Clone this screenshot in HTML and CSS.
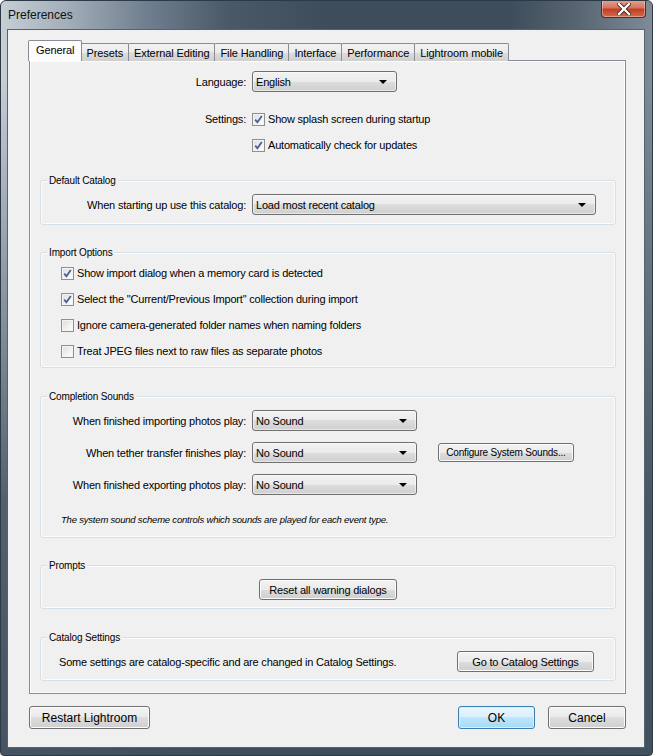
FILE: index.html
```html
<!DOCTYPE html>
<html lang="en">
<head>
  <meta charset="UTF-8" />
  <title>Preferences</title>
  <link rel="stylesheet" href="styles.css">
</head>
<body>

  <div class="window">

    <!-- Title bar -->
    <div class="titlebar">
      <span class="title">Preferences</span>
      <div class="close">
        <svg width="14" height="12" viewBox="0 0 14 12">
          <path d="M2 1 L12 11 M12 1 L2 11" stroke="#3a1a14" stroke-width="4" stroke-linecap="square" />
          <path d="M2 1 L12 11 M12 1 L2 11" stroke="#fff" stroke-width="2.4" stroke-linecap="square" />
        </svg>
      </div>
    </div>

    <div class="client">

      <!-- Tabs -->
      <div class="tabs">
        <div class="tab active">General</div>
        <div class="tab">Presets</div>
        <div class="tab">External Editing</div>
        <div class="tab">File Handling</div>
        <div class="tab">Interface</div>
        <div class="tab">Performance</div>
        <div class="tab">Lightroom mobile</div>
      </div>

      <div class="panel">

        <div class="top-section">
          <div class="field">
            <span class="label top-label">Language:</span>
            <div class="select lang-select"><span>English</span><i class="arrow"></i></div>
          </div>

          <div class="field check-row first">
            <span class="label top-label">Settings:</span>
            <span class="check checked"></span>
            <span>Show splash screen during startup</span>
          </div>
          <div class="field check-row">
            <span class="label top-label"></span>
            <span class="check checked"></span>
            <span>Automatically check for updates</span>
          </div>
        </div>

        <!-- Default Catalog -->
        <div class="group catalog-group">
          <span class="group-title">Default Catalog</span>
          <div class="field">
            <span class="label">When starting up use this catalog:</span>
            <div class="select catalog-select"><span>Load most recent catalog</span><i class="arrow"></i></div>
          </div>
        </div>

        <!-- Import Options -->
        <div class="group import-group">
          <span class="group-title">Import Options</span>
          <div class="option"><span class="check checked"></span><span>Show import dialog when a memory card is detected</span></div>
          <div class="option"><span class="check checked"></span><span>Select the "Current/Previous Import" collection during import</span></div>
          <div class="option"><span class="check"></span><span>Ignore camera-generated folder names when naming folders</span></div>
          <div class="option"><span class="check"></span><span>Treat JPEG files next to raw files as separate photos</span></div>
        </div>

        <!-- Completion Sounds -->
        <div class="group sounds-group">
          <span class="group-title">Completion Sounds</span>
          <div class="field sound-row">
            <span class="label">When finished importing photos play:</span>
            <div class="select sound-select"><span>No Sound</span><i class="arrow"></i></div>
          </div>
          <div class="field sound-row">
            <span class="label">When tether transfer finishes play:</span>
            <div class="select sound-select"><span>No Sound</span><i class="arrow"></i></div>
            <button class="btn btn-small">Configure System Sounds...</button>
          </div>
          <div class="field sound-row">
            <span class="label">When finished exporting photos play:</span>
            <div class="select sound-select"><span>No Sound</span><i class="arrow"></i></div>
          </div>
          <p class="note">The system sound scheme controls which sounds are played for each event type.</p>
        </div>

        <!-- Prompts -->
        <div class="group prompts-group">
          <span class="group-title">Prompts</span>
          <button class="btn reset-btn">Reset all warning dialogs</button>
        </div>

        <!-- Catalog Settings -->
        <div class="group settings-group">
          <span class="group-title">Catalog Settings</span>
          <span class="settings-text">Some settings are catalog-specific and are changed in Catalog Settings.</span>
          <button class="btn goto-btn">Go to Catalog Settings</button>
        </div>

      </div>

      <!-- Dialog buttons -->
      <div class="footer">
        <button class="btn restart-btn">Restart Lightroom</button>
        <div class="footer-right">
          <button class="btn btn-default ok-btn">OK</button>
          <button class="btn cancel-btn">Cancel</button>
        </div>
      </div>

    </div>
  </div>

</body>
</html>
```

FILE: styles.css
```css
html, body {
  margin: 0;
  padding: 0;
  background: #ffffff;
}

body {
  font-family: "Liberation Sans", Arial, sans-serif;
  font-size: 11px;
  letter-spacing: -0.2px;
  color: #000;
}

.window {
  width: 653px;
  height: 756px;
  box-sizing: border-box;
  display: flex;
  flex-direction: column;
  border: 1px solid #2c3a47;
  border-radius: 6px 6px 4px 4px;
  background:
    linear-gradient(to bottom, rgba(62, 77, 92, 0) 0px, rgba(62, 77, 92, 0) 80px, rgba(62, 77, 92, 0.85) 500px, rgba(62, 77, 92, 0.95) 756px),
    linear-gradient(to right, #c6ced6 0%, #a3afb9 10%, #718090 22%, #4a5968 35%, #3e4d5c 50%, #3e4d5c 78%, #56646f 88%, #7f8b96 100%);
  overflow: hidden;
}

/* Title bar */

.titlebar {
  height: 28px;
  display: flex;
  justify-content: space-between;
  align-items: flex-start;
}

.title {
  font-size: 12px;
  letter-spacing: 0;
  color: #111;
  margin: 7px 0 0 7px;
}

.close {
  width: 45px;
  height: 18px;
  margin-right: 6px;
  margin-top: -1px;
  box-sizing: border-box;
  border: 1px solid #5a2a22;
  border-top: none;
  border-radius: 0 0 4px 4px;
  background: linear-gradient(to bottom, #e8a493 0%, #d2745e 45%, #c13f24 55%, #d36a4c 100%);
  box-shadow: inset 0 0 0 1px rgba(255, 255, 255, 0.35);
  display: flex;
  justify-content: center;
  align-items: center;
}

/* Client area */

.client {
  flex: 1;
  margin: 0 7px 7px 6px;
  border: 1px solid #56626d;
  background-color: #f0f0f0;
  display: flex;
  flex-direction: column;
}

.tabs {
  display: flex;
  align-items: flex-end;
  height: 31px;
  padding-left: 20px;
  margin-bottom: -1px;
  box-sizing: border-box;
  position: relative;
  z-index: 1;
}

.tab {
  height: 18px;
  padding: 0 5px;
  box-sizing: border-box;
  display: flex;
  align-items: center;
  border: 1px solid #898c95;
  border-bottom: none;
  margin-left: -1px;
  border-radius: 2px 2px 0 0;
  background: linear-gradient(to bottom, #f2f2f2 0%, #ebebeb 50%, #dddddd 50%, #cfcfcf 100%);
  letter-spacing: -0.1px;
  white-space: nowrap;
}

.tab.active {
  height: 21px;
  margin-left: 0;
  padding: 0 7px 2px;
  background: #fcfcfc;
  position: relative;
  z-index: 2;
  margin-right: -1px;
}

.panel {
  height: 634px;
  margin: 0 18px 0 21px;
  box-sizing: border-box;
  border: 1px solid #898c95;
  background-color: #f0f0f0;
  box-shadow: inset 0 0 0 1px #fcfcfc;
  padding-top: 10px;
}

/* Rows */

.field {
  display: flex;
  align-items: center;
}

.label {
  text-align: right;
  margin-right: 6px;
  white-space: nowrap;
  flex-shrink: 0;
}

.top-label {
  width: 216px;
}

.check-row {
  height: 26px;
}

.check-row.first {
  margin-top: 14px;
}

.check-row span:last-child,
.option span:last-child {
  margin-left: 3px;
}

.select {
  height: 21px;
  box-sizing: border-box;
  display: flex;
  align-items: center;
  justify-content: space-between;
  padding: 0 9px 0 3px;
  border: 1px solid #707070;
  border-radius: 3px;
  background: linear-gradient(to bottom, #f2f2f2 0%, #ebebeb 50%, #dddddd 50%, #cfcfcf 100%);
  box-shadow: inset 0 0 0 1px rgba(255, 255, 255, 0.5);
}

.arrow {
  width: 0;
  height: 0;
  border-left: 4px solid transparent;
  border-right: 4px solid transparent;
  border-top: 4px solid #000;
  margin-top: 1px;
}

.lang-select {
  width: 145px;
}

.check {
  width: 13px;
  height: 13px;
  box-sizing: border-box;
  flex-shrink: 0;
  border: 1px solid #8e8f8f;
  background: linear-gradient(135deg, #dcdcdc 0%, #f6f6f6 70%, #ffffff 100%);
  box-shadow: inset 0 0 0 1px #f4f4f4;
}

.check.checked {
  background-image:
    url("data:image/svg+xml,%3Csvg xmlns='http://www.w3.org/2000/svg' width='11' height='11'%3E%3Cpath d='M2.2 5.6 L4.4 8.2 L8.8 2' fill='none' stroke='%234a5f97' stroke-width='1.8'/%3E%3C/svg%3E"),
    linear-gradient(135deg, #dcdcdc 0%, #f6f6f6 70%, #ffffff 100%);
  background-repeat: no-repeat;
  background-position: center;
}

/* Group boxes */

.group {
  position: relative;
  margin: 0 9px 0 10px;
  border: 1px solid #d5dfe5;
  border-radius: 3px;
  box-shadow: inset 0 0 0 1px #fcfcfc;
}

.group-title {
  position: absolute;
  top: -7px;
  left: 6px;
  padding: 0 2px 0 2px;
  background-color: #f0f0f0;
  font-size: 10px;
  letter-spacing: -0.15px;
  line-height: 13px;
}

.group .label {
  width: 205px;
}

.catalog-group {
  margin-top: 22px;
  padding: 13px 0 9px;
}

.catalog-select {
  width: 344px;
}

.import-group {
  margin-top: 27px;
  padding: 7px 0 3px 20px;
}

.option {
  height: 26px;
  display: flex;
  align-items: center;
}

.sounds-group {
  margin-top: 28px;
  padding: 13px 0 11px;
}

.sound-row + .sound-row {
  margin-top: 11px;
}

.sound-select {
  width: 165px;
}

.note {
  margin: 19px 0 0 20px;
  font-size: 9.5px;
  font-style: italic;
  line-height: 12px;
}

.prompts-group {
  margin-top: 27px;
  padding: 13px 0 8px;
  display: flex;
  justify-content: center;
}

.settings-group {
  margin-top: 28px;
  padding: 13px 0 8px 18px;
  display: flex;
  align-items: center;
  justify-content: space-between;
}

/* Buttons */

.btn {
  height: 21px;
  box-sizing: border-box;
  padding: 0;
  font-family: inherit;
  font-size: 11px;
  letter-spacing: -0.2px;
  color: #000;
  border: 1px solid #707070;
  border-radius: 3px;
  background: linear-gradient(to bottom, #f2f2f2 0%, #ebebeb 50%, #dddddd 50%, #cfcfcf 100%);
  box-shadow: inset 0 0 0 1px #fbfbfb;
}

.btn-small {
  width: 136px;
  height: 19px;
  margin-left: 21px;
  font-size: 10px;
}

.reset-btn {
  width: 138px;
}

.goto-btn {
  width: 137px;
  margin-right: 21px;
}

.btn-default {
  border-color: #3c7fb1;
  background: linear-gradient(to bottom, #eaf6fd 0%, #d9f0fc 50%, #bee6fd 50%, #a7d9f5 100%);
  box-shadow: inset 0 0 0 1px #d6f0fc;
}

.footer {
  flex: 1;
  display: flex;
  justify-content: space-between;
  align-items: flex-start;
  padding: 12px 18px 0 21px;
}

.footer .btn {
  height: 23px;
  font-size: 12px;
  letter-spacing: 0;
}

.restart-btn {
  width: 121px;
}

.footer-right {
  display: flex;
  gap: 13px;
}

.ok-btn {
  width: 77px;
}

.cancel-btn {
  width: 78px;
}
```
